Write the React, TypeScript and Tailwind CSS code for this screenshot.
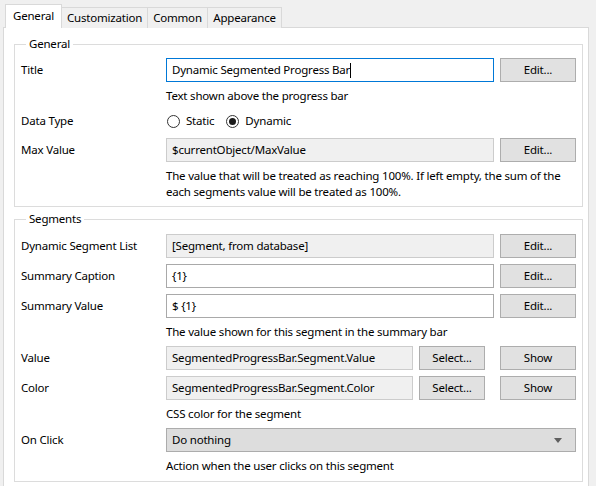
import type { ReactNode } from "react";

const ui = "font-['Noto_Sans',sans-serif] text-[11.5px] tracking-[-0.2px] leading-[16px] text-black";

function Label({ children }: { children: ReactNode }) {
  return <div className="w-[145px] shrink-0 leading-[16px]">{children}</div>;
}

function Btn({ children, w = "w-[76px]" }: { children: ReactNode; w?: string }) {
  return (
    <div
      className={`${w} h-[24px] shrink-0 flex items-center justify-center bg-[#e1e1e1] border border-[#adadad]`}
    >
      {children}
    </div>
  );
}

function Field({
  children,
  kind = "readonly",
}: {
  children: ReactNode;
  kind?: "readonly" | "edit" | "focus";
}) {
  const cls =
    kind === "focus"
      ? "bg-white border-[#0078d7]"
      : kind === "edit"
      ? "bg-white border-[#a9a9a9]"
      : "bg-[#f0f0f0] border-[#cccccc]";
  return (
    <div className={`flex-1 h-[24px] flex items-center px-[5px] border ${cls} whitespace-nowrap overflow-hidden`}>
      {children}
    </div>
  );
}

function Row({ label, children }: { label: string; children: ReactNode }) {
  return (
    <div className="flex items-center h-[24px]">
      <Label>{label}</Label>
      <div className="flex-1 flex items-center gap-[6px]">{children}</div>
    </div>
  );
}

function Help({ children }: { children: ReactNode }) {
  return <div className="pl-[145px] pr-[4px]">{children}</div>;
}

function Radio({ checked, label }: { checked?: boolean; label: string }) {
  return (
    <div className="flex items-center gap-[6px]">
      <span className="w-[13px] h-[13px] rounded-full border border-[#333333] bg-white flex items-center justify-center">
        {checked && <span className="w-[7px] h-[7px] rounded-full bg-[#1a1a1a]" />}
      </span>
      <span>{label}</span>
    </div>
  );
}

function Group({ title, children, className = "" }: { title: string; children: ReactNode; className?: string }) {
  return (
    <fieldset className={`border border-[#dcdcdc] pl-[6px] pr-[6px] ${className}`}>
      <legend className="ml-[5px] px-[3px] leading-[16px]">{title}</legend>
      {children}
    </fieldset>
  );
}

const tabs = [
  { name: "Customization", w: "w-[87px]" },
  { name: "Common", w: "w-[61px]" },
  { name: "Appearance", w: "w-[75px]" },
];

export default function App() {
  return (
    <div className={`${ui} w-[596px] h-[486px] bg-[#f0f0f0] overflow-hidden pl-[3px] pt-[4px]`}>
      {/* Tab strip */}
      <div className="flex items-end h-[24px] pl-[2px] relative z-10">
        <div className="w-[57px] h-[24px] bg-white border border-b-0 border-[#d9d9d9] flex items-center justify-center pb-[1px]">
          General
        </div>
        {tabs.map((t) => (
          <div
            key={t.name}
            className={`${t.w} h-[21px] -ml-px first:ml-0 bg-[#f0f0f0] border border-b-0 border-[#d9d9d9] flex items-center justify-center`}
          >
            {t.name}
          </div>
        ))}
      </div>

      {/* Panel */}
      <div className="w-[586px] h-[470px] -mt-px bg-white border border-[#d9d9d9] pl-[10px] pr-[5px] pt-[8px]">
        <Group title="General" className="pb-[6px]">
          <div className="flex flex-col gap-[6px] pt-[6px]">
            <Row label="Title">
              <Field kind="focus">
                Dynamic Segmented Progress Bar
                <span className="inline-block w-px h-[15px] bg-black" />
              </Field>
              <Btn>Edit...</Btn>
            </Row>
            <Help>Text shown above the progress bar</Help>
            <div className="flex items-center h-[22px]">
              <Label>Data Type</Label>
              <div className="flex items-center gap-[12px] pl-[1px]">
                <Radio label="Static" />
                <Radio checked label="Dynamic" />
              </div>
            </div>
            <Row label="Max Value">
              <Field>$currentObject/MaxValue</Field>
              <Btn>Edit...</Btn>
            </Row>
            <Help>
              The value that will be treated as reaching 100%. If left empty, the sum of the each segments value will be
              treated as 100%.
            </Help>
          </div>
        </Group>

        <Group title="Segments" className="mt-[4px] pb-[7px]">
          <div className="flex flex-col gap-[6px] pt-[7px]">
            <Row label="Dynamic Segment List">
              <Field>[Segment, from database]</Field>
              <Btn>Edit...</Btn>
            </Row>
            <Row label="Summary Caption">
              <Field kind="edit">{"{1}"}</Field>
              <Btn>Edit...</Btn>
            </Row>
            <Row label="Summary Value">
              <Field kind="edit">{"$ {1}"}</Field>
              <Btn>Edit...</Btn>
            </Row>
            <Help>The value shown for this segment in the summary bar</Help>
            <Row label="Value">
              <Field>SegmentedProgressBar.Segment.Value</Field>
              <Btn w="w-[66px]">Select...</Btn>
              <div className="w-[3px]" />
              <Btn>Show</Btn>
            </Row>
            <Row label="Color">
              <Field>SegmentedProgressBar.Segment.Color</Field>
              <Btn w="w-[66px]">Select...</Btn>
              <div className="w-[3px]" />
              <Btn>Show</Btn>
            </Row>
            <Help>CSS color for the segment</Help>
            <Row label="On Click">
              <div className="flex-1 h-[24px] flex items-center justify-between pl-[5px] pr-[13px] bg-[#dddddd] border border-[#acacac]">
                <span>Do nothing</span>
                <svg width="8" height="5" viewBox="0 0 8 5">
                  <path d="M0 0h8L4 5z" fill="#5f5f5f" />
                </svg>
              </div>
            </Row>
            <Help>Action when the user clicks on this segment</Help>
          </div>
        </Group>
      </div>
    </div>
  );
}
